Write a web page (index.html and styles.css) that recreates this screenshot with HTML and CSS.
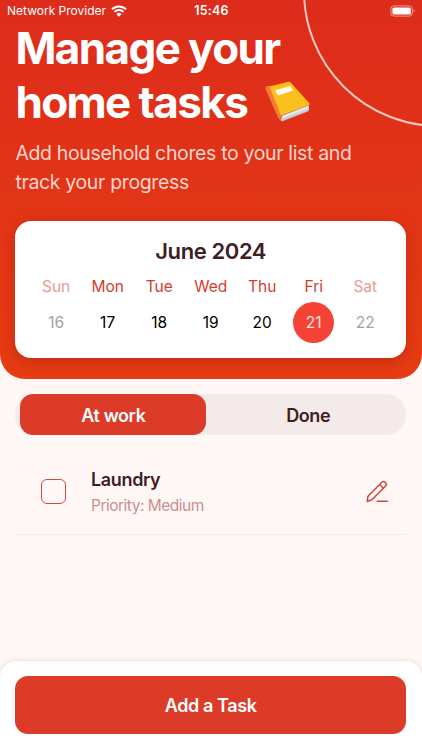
FILE: index.html
```
<!DOCTYPE html>
<html lang="en">
<head>
    <meta charset="UTF-8">
    <meta name="viewport" content="width=device-width, initial-scale=1.0">
    <title>Home Tasks</title>
    <link rel="stylesheet" href="styles.css">
</head>
<body>
    <header class="header">
        <div class="circle"></div>

        <div class="status-bar">
            <div class="provider">
                <span>Network Provider</span>
                <svg class="wifi" viewBox="0 0 16 12">
                    <path d="M1 4.3a10 10 0 0 1 14 0M3.4 6.9a6.6 6.6 0 0 1 9.2 0" fill="none" stroke="#fff" stroke-width="2"/>
                    <path d="M5.4 9a3.8 3.8 0 0 1 5.2 0L8 11.7z" fill="#fff"/>
                </svg>
            </div>
            <div class="time">15:46</div>
            <svg class="battery" viewBox="0 0 26 12">
                <rect x="0.9" y="0.9" width="21.4" height="10.2" rx="3" fill="none" stroke="#fff" stroke-opacity="0.5"/>
                <rect x="2.4" y="2.4" width="18.4" height="7.2" rx="1.6" fill="#fff"/>
                <path d="M23.6 4.3c1.4.5 1.4 2.9 0 3.4z" fill="#fff" fill-opacity="0.5"/>
            </svg>
        </div>

        <h1 class="title">Manage your<br>home tasks
            <svg class="book" viewBox="0 0 48 42">
                <path d="M18 34.5L45 24v4.6q0 1.2-1.2 1.8L19 40q-1.6.6-2.4-.7z" fill="#c3c9d0"/>
                <path d="M18 35.5L44.5 25v3.2L19 38z" fill="#f0f2f4"/>
                <path d="M19 37.2L44.5 27" stroke="#adb6bf" stroke-width=".6"/>
                <path d="M1.2 7.5Q1 5.5 3 5l4.5-.2L19 33.5q-3 2-2 6-2-.8-3-3z" fill="#f47a35"/>
                <path d="M5.5 5.5L24.5.8q1.5-.4 2.4 1L45.5 22.5q.5 1-.7 1.5L18.5 34q-1.5.4-2.2-1z" fill="#fcc01d"/>
                <path d="M11 9.2L26.5 5l2.7 4.5L14 14.5z" fill="#fffbed"/>
            </svg>
        </h1>
        <p class="subtitle">Add household chores to your list and track your progress</p>

        <div class="calendar">
            <h2>June 2024</h2>
            <div class="days">
                <div class="day weekend"><span>Sun</span><b>16</b></div>
                <div class="day"><span>Mon</span><b>17</b></div>
                <div class="day"><span>Tue</span><b>18</b></div>
                <div class="day"><span>Wed</span><b>19</b></div>
                <div class="day"><span>Thu</span><b>20</b></div>
                <div class="day today"><span>Fri</span><b>21</b></div>
                <div class="day weekend"><span>Sat</span><b>22</b></div>
            </div>
        </div>
    </header>

    <main class="content">
        <div class="tabs">
            <button class="tab active">At work</button>
            <button class="tab">Done</button>
        </div>

        <div class="task">
            <div class="checkbox"></div>
            <div class="task-text">
                <h3>Laundry</h3>
                <p>Priority: Medium</p>
            </div>
            <svg class="edit" viewBox="0 0 24 24">
                <path d="M2.2 21.5l.8-5.3L16.600 2.500a2.600 2.600 0 0 1 3.800 3.700L6.800 19.800zM14.700 4.500l3.700 3.700M12.300 21.300h10"/>
            </svg>
        </div>
    </main>

    <footer class="footer">
        <button class="add-btn">Add a Task</button>
    </footer>
</body>
</html>
```

FILE: styles.css
```
/* General Styles */
* {
    box-sizing: border-box;
}

body {
    font-family: Inter, sans-serif;
    background-color: #fff7f5;
    margin: 0;
    height: 100vh;
    display: flex;
    flex-direction: column;
    overflow: hidden;
    color: #3f2024;
}

h1, h2, h3, p {
    margin: 0;
}

button {
    font-family: inherit;
    border: none;
    padding: 0;
    cursor: pointer;
}

/* Header */
.header {
    position: relative;
    height: 379px;
    flex-shrink: 0;
    padding: 0 16px 0 15.4px;
    overflow: hidden;
    border-radius: 0 0 25px 25px;
    background: linear-gradient(#dd2c1b, #e73c12);
    color: #fff;
}

.circle {
    position: absolute;
    top: -145px;
    left: 303px;
    width: 272px;
    height: 272px;
    border: 2px solid rgba(255, 240, 236, 0.8);
    border-radius: 50%;
}

/* Status bar */
.status-bar {
    display: grid;
    grid-template-columns: 1fr auto 1fr;
    align-items: center;
    height: 21px;
    margin: 0 -10px 0 -8.4px;
    font-size: 12.5px;
}

.provider {
    display: flex;
    align-items: center;
    gap: 5px;
    font-size: 12px;
}

.wifi {
    width: 16px;
    height: 12px;
}

.time {
    font-weight: 600;
    letter-spacing: 0.2px;
}

.battery {
    width: 26px;
    height: 12px;
    justify-self: end;
}

.title {
    font-size: 44px;
    line-height: 54px;
    font-weight: 700;
    letter-spacing: -1.6px;
}

.book {
    width: 48px;
    height: 42px;
    margin-left: 8px;
    vertical-align: -5px;
}

.subtitle {
    max-width: 350px;
    margin-top: 10px;
    font-size: 19.5px;
    line-height: 28.5px;
    letter-spacing: -0.35px;
    color: #fbd5cd;
}

/* Calendar */
.calendar {
    margin-top: 24.5px;
    height: 137px;
    padding: 15px 15px 0;
    border-radius: 16px;
    background-color: #fff;
    box-shadow: 0 4px 14px rgba(90, 10, 0, 0.25);
}

.calendar h2 {
    font-size: 22px;
    line-height: 30px;
    font-weight: 600;
    letter-spacing: -0.4px;
    text-align: center;
    color: #3f2024;
}

.days {
    display: grid;
    grid-template-columns: repeat(7, 1fr);
    margin-top: 10px;
}

.day {
    display: flex;
    flex-direction: column;
    align-items: center;
    font-size: 15.5px;
    line-height: 22px;
    color: #d33d2e;
}

.day b {
    width: 41px;
    height: 41px;
    margin-top: 4px;
    border-radius: 50%;
    font-weight: 400;
    line-height: 42px;
    text-align: center;
    color: #000;
}

.weekend {
    color: #ea9b92;
}

.weekend b {
    color: #a3a3a3;
}

.day.today b {
    background-color: #f44336;
    color: #ffe3df;
}

/* Tabs and task list */
.content {
    flex: 1;
    padding: 15px 16px 0 15.4px;
}

.tabs {
    display: flex;
    height: 41px;
    padding-left: 5px;
    border-radius: 20px;
    background-color: #f4eae9;
}

.tab {
    flex: 1;
    padding: 1px 0 0 4px;
    border-radius: 13px;
    background: none;
    color: #3f2024;
    font-size: 18px;
    font-weight: 600;
    letter-spacing: -0.4px;
}

.tab.active {
    flex: 0 0 186px;
    padding-left: 0;
    background-color: #dc3b28;
    color: #fff;
}

.task {
    display: flex;
    align-items: center;
    height: 100px;
    padding: 14px 17px 0 25.6px;
    border-bottom: 1px solid #f7e8e6;
}

.checkbox {
    width: 25px;
    height: 25px;
    margin-right: 25px;
    border: 1.5px solid #cf4b40;
    border-radius: 6px;
}

.task-text {
    flex: 1;
    padding-top: 3px;
}

.task-text h3 {
    font-size: 18px;
    line-height: 26px;
    font-weight: 600;
    letter-spacing: -0.35px;
}

.task-text p {
    font-size: 15.5px;
    line-height: 26px;
    letter-spacing: -0.5px;
    color: #cb8f90;
}

.edit {
    width: 24px;
    height: 24px;
    fill: none;
    stroke: #cc483d;
    stroke-width: 1.5;
    stroke-linecap: round;
    stroke-linejoin: round;
}

/* Footer */
.footer {
    height: 89px;
    padding: 15.4px 16px 0 15.4px;
    border-radius: 16px 16px 0 0;
    background-color: #fff;
    box-shadow: 0 0 5px rgba(90, 30, 20, 0.15);
}

.add-btn {
    width: 100%;
    height: 58px;
    border-radius: 13px;
    background-color: #dc3b28;
    color: #fff;
    font-size: 18px;
    font-weight: 600;
    letter-spacing: -0.4px;
}
```
